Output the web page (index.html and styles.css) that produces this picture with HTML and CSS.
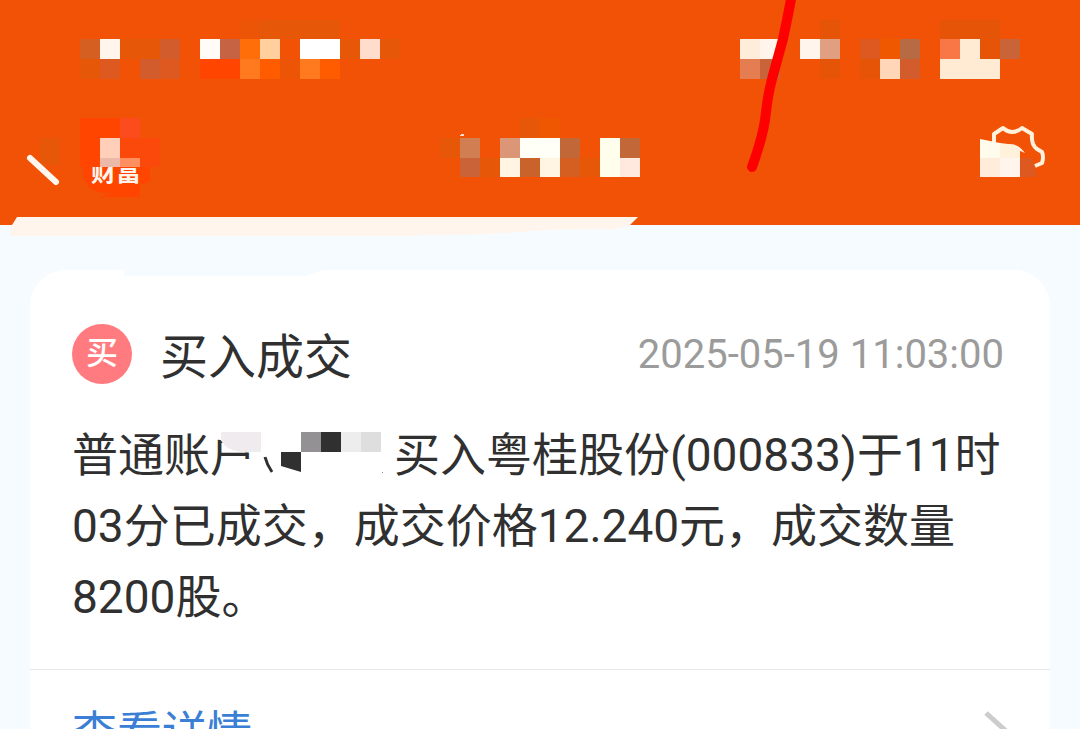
FILE: index.html
```html
<!DOCTYPE html>
<html lang="zh-CN">
<head>
    <meta charset="UTF-8">
    <meta name="viewport" content="width=device-width, initial-scale=1.0">
    <title>买入成交</title>
    <link rel="stylesheet" href="styles.css">
</head>
<body>
    <header class="header">
        <div class="status-bar">
            <svg width="320" height="60" viewBox="0 0 320 60" shape-rendering="crispEdges" aria-hidden="true">
                <path fill="#e65807" d="M180 0h80v19h-80zM40 19h40v20H40zM240 19h20v20h-20zM300 19h20v20h-20zM260 19h20v20h-20zM0 39h20v20H0z"/>
                <path fill="#ec5406" d="M160 0h20v19h-20zM200 39h20v20h-20z"/>
                <path fill="#d55f20" d="M0 19h20v20H0z"/>
                <path fill="#fff5ed" d="M20 19h20v20H20z"/>
                <path fill="#d35c2d" d="M80 19h20v20H80zM60 39h20v20H60z"/>
                <path fill="#dd5920" d="M20 39h20v20H20zM80 39h20v20H80z"/>
                <path fill="#fffcf7" d="M120 19h20v20h-20z"/>
                <path fill="#c56343" d="M140 19h20v20h-20z"/>
                <path fill="#ff6e08" d="M160 19h20v20h-20z"/>
                <path fill="#ffcf9e" d="M180 19h20v20h-20z"/>
                <path fill="#fff" d="M220 19h40v20h-40z"/>
                <path fill="#ffdccb" d="M280 19h20v20h-20z"/>
                <path fill="#ff4500" d="M120 39h40v20h-40z"/>
                <path fill="#ff7a1e" d="M160 39h20v20h-20zM220 39h20v20h-20z"/>
                <path fill="#ff5c00" d="M180 39h20v20h-20zM240 39h20v20h-20z"/>
            </svg>
            <svg width="280" height="60" viewBox="0 0 280 60" shape-rendering="crispEdges" aria-hidden="true">
                <path fill="#e65507" d="M80 0h20v19H80zM80 39h20v20H80zM200 0h60v39h-60zM120 39h20v20h-20z"/>
                <path fill="#ffeddc" d="M0 19h20v20H0z"/>
                <path fill="#fff5ed" d="M20 19h20v20H20zM60 19h20v20H60z"/>
                <path fill="#e57d52" d="M0 39h20v20H0z"/>
                <path fill="#c8633a" d="M20 39h20v20H20z"/>
                <path fill="#df9f80" d="M80 19h20v20H80z"/>
                <path fill="#dd5920" d="M120 19h20v20h-20z"/>
                <path fill="#f05800" d="M140 19h20v20h-20z"/>
                <path fill="#b76b43" d="M160 19h20v20h-20z"/>
                <path fill="#ffd6b8" d="M140 39h20v20h-20z"/>
                <path fill="#d35c2d" d="M160 39h20v20h-20z"/>
                <path fill="#f97746" d="M200 19h20v20h-20z"/>
                <path fill="#ffead3" d="M220 19h20v20h20v20h-60V39h20z"/>
                <path fill="#c96338" d="M260 19h20v20h-20z"/>
            </svg>
        </div>
        <nav class="nav-bar">
            <div class="nav-left">
                <button class="icon-button" type="button" aria-label="返回">
                    <svg width="60" height="90" viewBox="0 0 60 90">
                        <path fill="#e65807" d="M20 28h20v27H20z"/>
                        <path fill="none" stroke="#fff8f0" stroke-width="6" stroke-linecap="round" d="M10 48l26 24"/>
                    </svg>
                </button>
                <svg width="80" height="90" viewBox="0 0 80 90" role="img" aria-label="财富">
                    <path fill="#ff4500" d="M0 8h60v20h20v29h-10v14l-10 4v12H20l14-4q-24 2-30-14l-1-12H0z"/>
                    <path fill="#fc4c1d" d="M40 8h20v20H40z"/>
                    <path fill="#fb480b" d="M40 28h40v29H40z"/>
                    <text class="logo-text" x="11" y="71">财富</text>
                    <path fill="#ff4500" d="M4 46h16v11H4z"/>
                    <path fill="#fb480b" d="M60 46h18v11H60zM40 46h20v3H40z"/>
                    <path fill="#ffcfb9" d="M20 28h20v20H20z"/>
                    <path fill="#ecb9a8" d="M20 48h20v9H20z"/>
                    <path fill="#ff8f60" d="M40 48h20v9H40z"/>
                </svg>
            </div>
            <svg width="200" height="90" viewBox="0 0 200 90" shape-rendering="crispEdges" aria-hidden="true">
                <path fill="#e65807" d="M80 8h20v20H80zM0 28h20v20H0zM40 48h20v19H40zM140 48h20v19h-20z"/>
                <path fill="#ef5700" d="M100 8h20v20h-20z"/>
                <path fill="#ffdccb" d="M21 24h3v2h-4z"/>
                <path fill="#d17e52" d="M20 28h20v20H20z"/>
                <path fill="#cb6338" d="M20 48h20v19H20z"/>
                <path fill="#da9677" d="M60 28h20v20H60z"/>
                <path fill="#fffff8" d="M80 28h40v20H80z"/>
                <path fill="#c26838" d="M120 28h20v20h-20zM180 28h20v20h-20z"/>
                <path fill="#fff5e2" d="M60 48h20v19H60zM100 48h20v19h-20z"/>
                <path fill="#c9622b" d="M80 48h20v19H80z"/>
                <path fill="#d55f20" d="M120 48h20v19h-20z"/>
                <path fill="#fffdec" d="M160 28h20v39h-20z"/>
                <path fill="#ffe9de" d="M180 48h20v19h-20z"/>
            </svg>
            <button class="icon-button nav-right" type="button" aria-label="设置">
                <svg width="80" height="90" viewBox="0 0 80 90">
                    <path fill="none" stroke="#fff1dc" stroke-width="4" stroke-linejoin="round" d="M14 32V24L23 18Q32 26 42 18L52 24Q51 35 57 39L62 42Q64 47 62 53L55 56"/>
                    <path fill="#fffced" d="M0 29l20 4v15H0z"/>
                    <path fill="#fff1dc" d="M20 33l8 1q10-1 17 9-4-2-5-2v7H20z"/>
                    <path fill="#ffecdb" d="M0 48h20v19H0z"/>
                    <path fill="#fff5ed" d="M20 48h20v19H20z"/>
                    <path fill="#dd5920" d="M40 48h12l5 19H40z"/>
                </svg>
            </button>
        </nav>
        <svg class="pen-mark" width="60" height="180" viewBox="0 0 60 180" aria-hidden="true">
            <path fill="none" stroke="#f00" stroke-width="10" stroke-linecap="round" stroke-linejoin="round" d="M51-6Q47 16 42 39L31 79Q27 94 25 112Q23 134 11 167"/>
        </svg>
        <svg class="brush-mark" width="630" height="20" viewBox="0 0 630 20" aria-hidden="true">
            <path fill="#fff5ec" d="M7 0H628l-8 8q-6 4-20 4l-65 1-55 4-50 1-40 1H0q0-8 2-11z"/>
        </svg>
    </header>

    <main class="card">
        <svg class="card-smudge" width="200" height="6" viewBox="0 0 200 6" aria-hidden="true">
            <path fill="#f5fbff" d="M0 0h200q-8 1-16 6H0z"/>
        </svg>
        <div class="card-body">
            <div class="card-head">
                <span class="badge">买</span>
                <h1 class="title">买入成交</h1>
                <time class="time" datetime="2025-05-19T11:03:00">2025-05-19 11:03:00</time>
            </div>
            <p class="message">普通账户<span class="masked"><svg class="mask" width="179" height="50" viewBox="0 0 179 50" aria-hidden="true">
                <path fill="#fff" d="M0 0h179v50H42V24Q18 24 7 12L0 8z"/>
                <path fill="#f0ebef" d="M6 3h40v20H26Q9 20 6 11z"/>
                <path fill="none" stroke="#303030" stroke-width="3" d="M50 28q2 8 7 15"/>
                <path fill="#303030" d="M106 3h20v20h-20zM66 23h20v20l-20-6z"/>
                <path fill="#949195" d="M86 3h20v20H86z"/>
                <path fill="#ededed" d="M126 3h20v20h-20z"/>
                <path fill="#dedede" d="M146 3h20v20h-20z"/>
                <path fill="#888" d="M167 43h1v1h-1z"/>
            </svg></span>买入粤桂股份(000833)于11时03分已成交，成交价格12.240元，成交数量8200股。</p>
        </div>
        <a class="detail-link" href="#">
            <span>查看详情</span>
            <svg width="24" height="48" viewBox="0 0 24 48" aria-hidden="true">
                <path fill="none" stroke="#ccc" stroke-width="5" d="M2 7l20 18L2 43"/>
            </svg>
        </a>
    </main>
</body>
</html>
```
FILE: styles.css
```css
* {
    box-sizing: border-box;
}

body {
    margin: 0;
    height: 100vh;
    overflow: hidden;
    background-color: #f5fbff;
    color: #303030;
    font-family: Roboto, "Noto Sans CJK SC", sans-serif;
}

svg {
    display: block;
}

/* Header */
.header {
    position: relative;
    padding: 20px 0 25px;
    background-color: #f15205;
}

.status-bar {
    display: flex;
    justify-content: space-between;
    padding: 0 60px 0 80px;
}

.nav-bar {
    display: grid;
    grid-template-columns: 1fr auto 1fr;
    padding: 0 20px;
    margin-top: 30px;
}

.nav-left {
    display: flex;
}

.nav-right {
    justify-self: end;
}

.icon-button {
    padding: 0;
    border: none;
    background: none;
}

.logo-text {
    fill: #fff5ec;
    font-size: 25px;
    font-weight: bold;
}

.pen-mark {
    position: absolute;
    top: 0;
    left: 741px;
}

.brush-mark {
    position: absolute;
    top: 217px;
    left: 10px;
}

/* Message card */
.card {
    position: relative;
    margin: 45px 30px 0;
    border-radius: 36px;
    background-color: #fff;
}

.card-smudge {
    position: absolute;
    top: 0;
    left: 94px;
}

.card-body {
    padding: 48px 42px 36px;
}

.card-head {
    display: flex;
    align-items: center;
    height: 72px;
}

.badge {
    width: 60px;
    height: 60px;
    border-radius: 50%;
    background-color: #ff7b80;
    color: #fff;
    font-size: 32px;
    font-weight: 500;
    line-height: 58px;
    text-align: center;
}

.title {
    margin: 0 0 0 28px;
    padding-top: 8px;
    font-size: 48px;
    font-weight: normal;
    line-height: 72px;
}

.time {
    margin-left: auto;
    padding: 2px 4px 0 0;
    color: #9b9b9b;
    font-size: 40px;
    line-height: 72px;
}

.message {
    margin: 30px 0 0;
    font-size: 46px;
    line-height: 71px;
}

/* Hidden account number, drawn over the end of the word before it */
.masked {
    display: inline-block;
    position: relative;
    width: 138px;
}

.mask {
    position: absolute;
    right: 0;
    bottom: -8px;
}

.detail-link {
    display: flex;
    align-items: center;
    justify-content: space-between;
    height: 120px;
    padding: 0 42px;
    border-top: 1px solid #e8e8e8;
    color: #3a7fd5;
    font-size: 45px;
    text-decoration: none;
}
```
